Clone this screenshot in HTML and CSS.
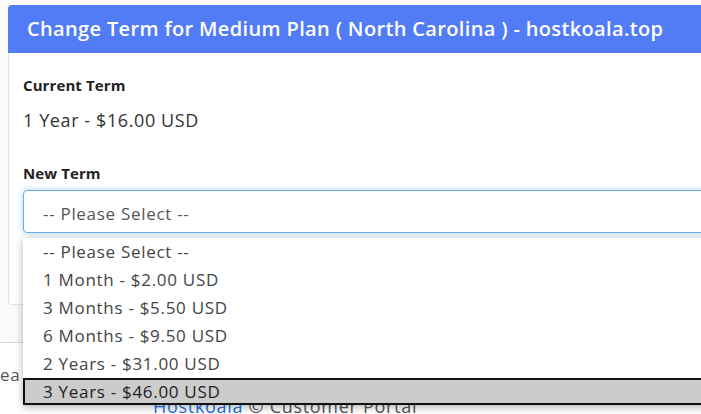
FILE: index.html
```html
<!DOCTYPE html>
<html>
<head>
<meta charset="utf-8">
<link rel="stylesheet" href="styles.css">
</head>
<body>
<div class="page">
  <div class="card">
    <div class="card-header">Change Term for Medium Plan ( North Carolina ) - hostkoala.top</div>
    <div class="card-body">
      <div class="label">Current Term</div>
      <div class="value">1 Year - $16.00 USD</div>
      <div class="label label-new">New Term</div>
      <div class="select">-- Please Select --</div>
    </div>
  </div>
  <div class="gap"></div>
  <div class="footer">
    <div class="footer-prev">ea</div>
    <div class="footer-copy"><span class="link">Hostkoala</span> © Customer Portal</div>
  </div>
</div>
<ul class="dropdown">
  <li>-- Please Select --</li>
  <li>1 Month - $2.00 USD</li>
  <li>3 Months - $5.50 USD</li>
  <li>6 Months - $9.50 USD</li>
  <li>2 Years - $31.00 USD</li>
  <li class="selected">3 Years - $46.00 USD</li>
</ul>
</body>
</html>
```
FILE: styles.css
```css
html, body {
  margin: 0;
  padding: 0;
  background: #ffffff;
  overflow: hidden;
}
body {
  width: 701px;
  height: 414px;
  font-family: "Open Sans", "Liberation Sans", sans-serif;
  color: #333;
  position: relative;
}
.page {
  background: #fafafa;
  padding-top: 5px;
}
.card {
  margin-left: 8px;
  width: 720px;
  border-radius: 4px 0 0 4px;
  background: #fff;
  border-left: 1px solid #e3e3e3;
  border-bottom: 1px solid #e3e3e3;
}
.card-header {
  background: #527bf6;
  color: #fff;
  height: 48px;
  line-height: 48px;
  padding-left: 19px;
  font-size: 20px;
  font-weight: 600;
  letter-spacing: 0.35px;
  border-radius: 4px 0 0 0;
  margin-left: -1px;
  white-space: nowrap;
}
.card-body {
  padding: 22px 15px 0 14px;
  height: 229px;
}
.label {
  font-size: 15px;
  font-weight: 700;
  line-height: 20px;
  letter-spacing: 0.1px;
  color: #222;
}
.value {
  margin-top: 13px;
  font-size: 18px;
  line-height: 24px;
  letter-spacing: 0.6px;
  color: #333;
}
.label-new {
  margin-top: 31px;
}
.select {
  margin-top: 7px;
  height: 41px;
  border: 1px solid #66afe9;
  border-radius: 4px 0 0 4px;
  box-shadow: 0 0 6px rgba(102, 175, 233, 0.5);
  line-height: 45px;
  padding-left: 19px;
  font-size: 17px;
  letter-spacing: 0.7px;
  color: #555;
}
.gap {
  height: 37px;
}
.footer {
  background: #fff;
  border-top: 1px solid #dcdcdc;
  height: 80px;
}
.footer-prev {
  margin-top: 21px;
  font-size: 17px;
  line-height: 22px;
  letter-spacing: 0.7px;
  color: #555;
}
.footer-copy {
  margin-top: 9px;
  padding-left: 153px;
  font-size: 18px;
  line-height: 22px;
  letter-spacing: 0.7px;
  color: #555;
}
.link {
  color: #1f6fe0;
  text-decoration: underline;
}
.dropdown {
  position: absolute;
  top: 238px;
  left: 23px;
  width: 700px;
  margin: 0;
  padding: 0;
  list-style: none;
  background: #fff;
  box-shadow: 0 2px 8px rgba(0, 0, 0, 0.3);
}
.dropdown li {
  height: 28px;
  line-height: 28px;
  padding-left: 20px;
  font-size: 17px;
  letter-spacing: 0.7px;
  color: #444;
  white-space: nowrap;
}
.dropdown li.selected {
  background: #cccccc;
  color: #222;
  border: 2px solid #111;
  height: 23px;
  line-height: 23px;
  padding-left: 18px;
}
```
